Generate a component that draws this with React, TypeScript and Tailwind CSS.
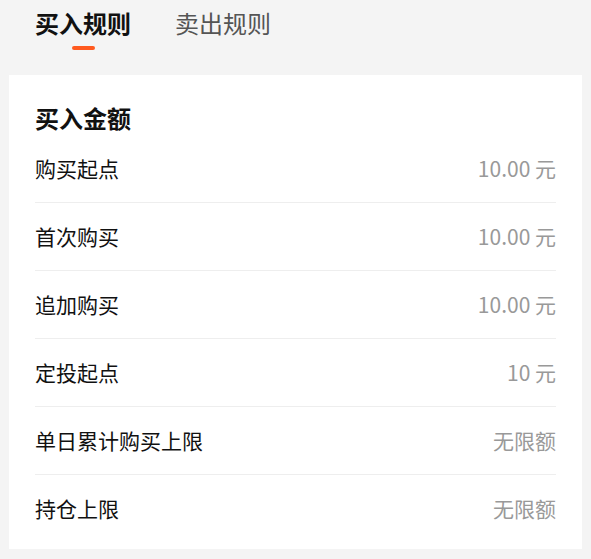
const rows = [
  { label: "购买起点", value: "10.00 元" },
  { label: "首次购买", value: "10.00 元" },
  { label: "追加购买", value: "10.00 元" },
  { label: "定投起点", value: "10 元" },
  { label: "单日累计购买上限", value: "无限额" },
  { label: "持仓上限", value: "无限额" },
];

const App = () => {
  return (
    <div
      className="w-[591px] h-[559px] bg-[#f4f4f4] overflow-hidden"
      style={{ fontFamily: '"Noto Sans CJK SC", "Noto Sans", sans-serif' }}
    >
      <div className="h-[75px] flex gap-[44px] pl-[35px] pt-[7px]">
        <div className="flex flex-col items-center">
          <span className="text-[24px] leading-[32px] font-bold text-[#111]">买入规则</span>
          <span className="mt-[7px] w-[23px] h-[4px] rounded-full bg-[#ff5a1f]" />
        </div>
        <div className="flex flex-col items-center">
          <span className="text-[24px] leading-[32px] text-[#555]">卖出规则</span>
        </div>
      </div>
      <div className="mx-[9px] bg-white h-[474px] px-[26px] pt-[27px]">
        <h2 className="text-[24px] leading-[32px] font-bold text-[#111] mb-[1px]">买入金额</h2>
        {rows.map((r, i) => (
          <div
            key={i}
            className={
              "flex justify-between items-center h-[68px] text-[21px] " +
              (i < rows.length - 1 ? "border-b border-[#eeeeee]" : "")
            }
          >
            <span className="text-[#111]">{r.label}</span>
            <span className="text-[#999]">{r.value}</span>
          </div>
        ))}
      </div>
    </div>
  );
};

export default App;
